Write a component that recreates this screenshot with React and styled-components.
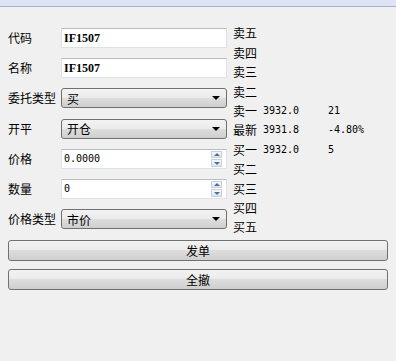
import React from "react";
import styled, { createGlobalStyle } from "styled-components";

const GlobalStyle = createGlobalStyle`
    html, body {
        margin: 0;
        padding: 0;
        background: #f0f0f0;
    }
    body {
        font-family: "Noto Sans CJK SC", "Liberation Sans", sans-serif;
        font-size: 12px;
        color: #000;
    }
`

const Window = styled.div`
    width: 396px;
    height: 361px;
    background: #f0f0f0;
    display: flex;
    flex-direction: column;
`

const TitleStrip = styled.div`
    height: 6px;
    background: #dfe4f5;
    border-bottom: 1px solid #aab0c6;
`

const Body = styled.div`
    display: flex;
    flex-direction: column;
    padding: 0 8px;
`

const Top = styled.div`
    display: flex;
    align-items: flex-start;
`

const Form = styled.div`
    margin-top: 21px;
    display: grid;
    grid-template-columns: 53px 166px;
    grid-auto-rows: 20px;
    row-gap: 10.2px;
    align-items: center;
`

const Label = styled.div`
    line-height: 20px;
    white-space: nowrap;
`

const TextBox = styled.div`
    box-sizing: border-box;
    height: 20px;
    background: #fff;
    border: 1px solid #dde2e8;
    border-top-color: #b6bcc6;
    display: flex;
    align-items: center;
    padding-left: 2px;
    font-family: ${p => p.serif ? '"Liberation Serif", serif' : '"DejaVu Sans Mono", monospace'};
    font-weight: ${p => p.serif ? 700 : 400};
    font-size: ${p => p.serif ? "12px" : "10px"};
    position: relative;
`

const Combo = styled.div`
    box-sizing: border-box;
    height: 20px;
    border: 1px solid #707070;
    border-radius: 3px;
    background: linear-gradient(#f3f3f3 0%, #ebebeb 50%, #dddddd 51%, #cfcfcf 100%);
    display: flex;
    align-items: center;
    justify-content: space-between;
    padding: 0 6px 0 5px;
`

const Arrow = styled.span`
    width: 0;
    height: 0;
    border-left: 4px solid transparent;
    border-right: 4px solid transparent;
    border-top: 4px solid #000;
`

const Spin = styled.div`
    position: absolute;
    right: 4px;
    top: 1px;
    bottom: 1px;
    width: 11px;
    display: flex;
    flex-direction: column;
    gap: 1px;
`

const SpinHalf = styled.div`
    flex: 1;
    border: 1px solid #c9d0da;
    background: linear-gradient(#f6f8fb, #dfe5ee);
    display: flex;
    align-items: center;
    justify-content: center;
`

const SpinTri = styled.span`
    width: 0;
    height: 0;
    border-left: 3px solid transparent;
    border-right: 3px solid transparent;
    ${p => p.up ? "border-bottom: 3px solid #4a6fa5;" : "border-top: 3px solid #4a6fa5;"}
`

const Quote = styled.div`
    margin-left: 6px;
    margin-top: 16.3px;
    display: grid;
    grid-template-columns: 30px 65px 60px;
    grid-auto-rows: 19.4px;
    align-items: center;
`

const QLabel = styled.div`
    white-space: nowrap;
`

const QNum = styled.div`
    font-family: "DejaVu Sans Mono", monospace;
    font-size: 10px;
`

const Buttons = styled.div`
    margin-top: 3px;
    display: flex;
    flex-direction: column;
    gap: 8px;
`

const Button = styled.div`
    box-sizing: border-box;
    height: 21px;
    border: 1px solid #707070;
    border-radius: 3px;
    background: linear-gradient(#f2f2f2 0%, #ebebeb 48%, #dddddd 50%, #cfcfcf 100%);
    display: flex;
    align-items: center;
    justify-content: center;
`

const SpinBox = ({ value }) => (
    <TextBox>
        {value}
        <Spin>
            <SpinHalf><SpinTri up /></SpinHalf>
            <SpinHalf><SpinTri /></SpinHalf>
        </Spin>
    </TextBox>
)

const quotes = [
    ["卖五", "", ""],
    ["卖四", "", ""],
    ["卖三", "", ""],
    ["卖二", "", ""],
    ["卖一", "3932.0", "21"],
    ["最新", "3931.8", "-4.80%"],
    ["买一", "3932.0", "5"],
    ["买二", "", ""],
    ["买三", "", ""],
    ["买四", "", ""],
    ["买五", "", ""],
]

const App = () => {
    return (
        <Window>
            <GlobalStyle />
            <TitleStrip />
            <Body>
                <Top>
                    <Form>
                        <Label>代码</Label>
                        <TextBox serif>IF1507</TextBox>
                        <Label>名称</Label>
                        <TextBox serif>IF1507</TextBox>
                        <Label>委托类型</Label>
                        <Combo>买<Arrow /></Combo>
                        <Label>开平</Label>
                        <Combo>开仓<Arrow /></Combo>
                        <Label>价格</Label>
                        <SpinBox value="0.0000" />
                        <Label>数量</Label>
                        <SpinBox value="0" />
                        <Label>价格类型</Label>
                        <Combo>市价<Arrow /></Combo>
                    </Form>
                    <Quote>
                        {quotes.map(([name, price, extra]) => (
                            <React.Fragment key={name}>
                                <QLabel>{name}</QLabel>
                                <QNum>{price}</QNum>
                                <QNum>{extra}</QNum>
                            </React.Fragment>
                        ))}
                    </Quote>
                </Top>
                <Buttons>
                    <Button>发单</Button>
                    <Button>全撤</Button>
                </Buttons>
            </Body>
        </Window>
    )
}

export default App;
